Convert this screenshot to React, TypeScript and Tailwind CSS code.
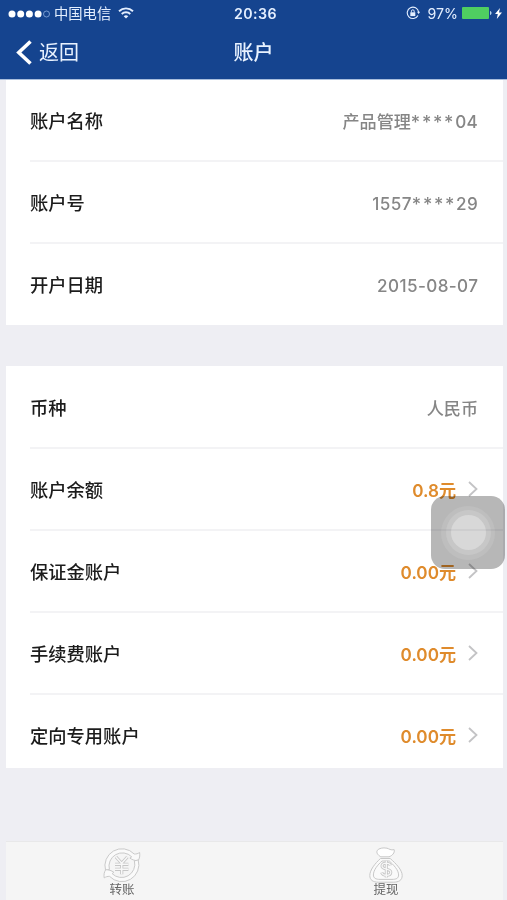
import type { ReactNode } from "react"

interface RowProps {
  label: string
  children: ReactNode
  amount?: boolean
  last?: boolean
}

function ChevronRight() {
  return (
    <svg className="-mt-[3px] ml-3 h-4 w-[10px] shrink-0" viewBox="0 0 10 16" fill="none" stroke="#c3c3c5" strokeWidth="1.8">
      <path d="M1 1l7.5 7L1 15" />
    </svg>
  )
}

function Stars() {
  return <span className="relative top-px text-[18px] tracking-[1.7px]">****</span>
}

function Row({ label, children, amount, last }: RowProps) {
  return (
    <div
      className={`ml-6 flex h-[82px] items-center justify-between pr-[25px] ${last ? "pt-px" : "border-b-2 border-[#f3f3f5] pt-[3px]"}`}
    >
      <span className="text-[18.3px] font-medium text-[#1c1c1c]">{label}</span>
      <div
        className={`flex items-center text-[17.1px] whitespace-nowrap ${amount ? "font-semibold text-[#df8b2c]" : "font-medium text-[#868686]"}`}
      >
        <span>{children}</span>
        {amount && <ChevronRight />}
      </div>
    </div>
  )
}

function StatusBar() {
  return (
    <div className="grid h-[27px] grid-cols-3 items-center text-[#e4efff]">
      <div className="flex items-center pl-2">
        <svg className="h-[10px] w-[43px]" viewBox="0 0 43 10" fill="#fff">
          <circle cx="4" cy="5" r="3.5" />
          <circle cx="12.7" cy="5" r="3.5" />
          <circle cx="21.4" cy="5" r="3.5" />
          <circle cx="30.1" cy="5" r="3.5" />
          <circle cx="38.5" cy="5" r="3" fill="none" stroke="#8fb0e0" strokeWidth="0.8" />
        </svg>
        <span className="ml-[3px] text-[14.3px] leading-5 whitespace-nowrap">中国电信</span>
        <svg className="-mt-[2px] ml-[7px] h-[12px] w-[16px]" viewBox="0 0 16 12" fill="none" stroke="currentColor" strokeWidth="1.9">
          <path d="M1 4.2a10.2 10.2 0 0 1 14 0" />
          <path d="M3.7 7a6.3 6.3 0 0 1 8.6 0" />
          <path d="M5.7 9.2a3.4 3.4 0 0 1 4.6 0L8 11.6z" fill="currentColor" stroke="none" />
        </svg>
      </div>
      <span className="pl-[4px] text-center text-[14.2px] font-semibold tracking-[0.4px]">20:36</span>
      <div className="flex items-center justify-end pr-[5px]">
        <svg className="h-[14px] w-[14px]" viewBox="0 0 14 14" fill="none" stroke="currentColor">
          <path d="M12 9.5A5.7 5.7 0 1 1 12.6 6" strokeWidth="1.1" />
          <path d="M11 5.7h3.2l-1.6 2.3z" fill="currentColor" stroke="none" />
          <path d="M4.3 6.3h5v3.8h-5z" fill="currentColor" stroke="none" />
          <path d="M5.4 6.5V5.2a1.4 1.4 0 0 1 2.8 0v1.3" strokeWidth="1" />
        </svg>
        <span className="ml-2 text-[14.2px]">97%</span>
        <svg className="ml-1 h-3 w-[30px]" viewBox="0 0 30 12">
          <rect x="0" y="0" width="27" height="12" rx="1" fill="#4fce61" />
          <path d="M28 4c2 .5 2 3.5 0 4z" fill="#b9d6ee" />
        </svg>
        <svg className="ml-[3px] h-[11px] w-[7px]" viewBox="0 0 7 11" fill="#fff">
          <path d="M5 0L0 6h2.8L1.8 11 7 4.6H4z" />
        </svg>
      </div>
    </div>
  )
}

function TransferIcon() {
  const yen = "M13 10l5.7 6.3 5.7-6.3M18.7 16.3v11M12 17.3h13.4M12 22.3h13.4"
  return (
    <svg className="h-9 w-[38px]" viewBox="0 0 38 36" fill="#fafafa" stroke="#cacaca" strokeWidth="1" strokeLinejoin="round">
      <path d="M2.6 23.5A17 17 0 0 1 31.2 7c2 .2 3.8-.4 5.4-1.5.5 3.2 0 5.9-1.5 8.2-3 0-5.8-.8-8.2-2.6l1.8-1.3A13.3 13.3 0 0 0 6.4 22.5z" />
      <path d="M35.2 12.9A17 17 0 0 1 6.6 29.4c-2-.2-3.8.4-5.4 1.5-.5-3.2 0-5.9 1.5-8.2 3 0 5.8.8 8.2 2.6l-1.8 1.3A13.3 13.3 0 0 0 31.4 13.9z" />
      <path d={yen} fill="none" stroke="#c6c6c6" strokeWidth="3.2" />
      <path d={yen} fill="none" stroke="#f8f8f8" strokeWidth="1.5" />
    </svg>
  )
}

function WithdrawIcon() {
  const dollar = "M21.5 18.5c-.6-1.7-2-2.3-4.3-2.3-2.5 0-4.2 1.1-4.2 2.9 0 4.2 8.8 2 8.8 6.2 0 1.9-1.9 3-4.4 3s-4.2-1-4.8-2.7M17.3 13.8v16.8"
  return (
    <svg className="h-9 w-[34px]" viewBox="0 0 34 36" fill="#fafafa" stroke="#c8c8c8" strokeWidth="1" strokeLinejoin="round">
      <path d="M11.8 9.8C8.7 8 7.2 5.7 8.2 3.5 9.8 1.2 14 .4 18 1.2c2 .5 3.7 2.3 7.2 1.5.8 3-2 6.1-5.2 7.1z" fill="#fff" />
      <path d="M11.5 11.5h9.7C27 16.5 33.2 23 33.2 28.5c0 4.8-3.4 6.7-9 6.7H9.5C4 35.2.8 33 .8 28.5c0-5.5 5.2-12 10.7-17z" />
      <path d="M13 14h7.3c4.2 3.8 9.3 9 9.3 14 0 3.3-2.4 4.4-6.6 4.4H11c-4.1 0-6.6-1.2-6.6-4.4 0-5 4.4-10.2 8.6-14z" />
      <path d={dollar} fill="none" stroke="#c6c6c6" strokeWidth="3" />
      <path d={dollar} fill="none" stroke="#f8f8f8" strokeWidth="1.3" />
    </svg>
  )
}

export default function App() {
  return (
    <div className="relative flex h-[900px] w-[507px] flex-col overflow-hidden bg-[#eeeef3] font-[Inter,'Noto_Sans_CJK_SC',sans-serif]">
      <header className="h-[79px] shrink-0 bg-[#15448f]">
        <StatusBar />
        <div className="grid h-[50px] grid-cols-3 items-center text-[#e8f2ff]">
          <div className="flex items-center pl-4">
            <svg className="h-[25px] w-[16px]" viewBox="0 0 16 25" fill="none" stroke="#fff" strokeWidth="3.6">
              <path d="M14.5 1.5L2.8 12.5l11.7 11" />
            </svg>
            <span className="ml-[7px] pt-[2px] text-[20px]">返回</span>
          </div>
          <h1 className="pt-[2px] text-center text-[20px] font-medium">账户</h1>
        </div>
      </header>

      <main className="flex flex-1 flex-col gap-[41px] border-t border-[#a9bedd] pr-1 pl-1.5">
        <section className="h-[245px] bg-white">
          <Row label="账户名称">
            产品管理<Stars /><span className="tracking-[0.3px]">04</span>
          </Row>
          <Row label="账户号">
            <span className="tracking-[0.4px]">1557</span><Stars /><span className="tracking-[0.3px]">29</span>
          </Row>
          <Row label="开户日期" last>
            <span className="-mr-[0.4px] tracking-[0.4px]">2015-08-07</span>
          </Row>
        </section>

        <section className="h-[402px] bg-white pt-px">
          <Row label="币种">人民币</Row>
          <Row label="账户余额" amount>0.8元</Row>
          <Row label="保证金账户" amount>0.00元</Row>
          <Row label="手续费账户" amount>0.00元</Row>
          <Row label="定向专用账户" amount last>0.00元</Row>
        </section>
      </main>

      <nav className="mr-1 ml-1.5 flex h-[59px] shrink-0 border-t border-[#e8e8e9] bg-[#f5f5f5] pt-[5px] text-[12.5px] leading-[14px] text-[#666]">
        <div className="flex w-[232px] flex-col items-center">
          <TransferIcon />
          <span>转账</span>
        </div>
        <div className="ml-8 flex w-[232px] flex-col items-center">
          <WithdrawIcon />
          <span>提现</span>
        </div>
      </nav>

      {/* AssistiveTouch button floating over the rows */}
      <div className="absolute top-[496px] left-[431px] flex h-[73px] w-[74px] items-center justify-center rounded-[14px] bg-[#b7b7b7] mix-blend-multiply">
        <div className="flex size-[54px] items-center justify-center rounded-full bg-[#bebebe]">
          <div className="flex size-[45px] items-center justify-center rounded-full bg-[#c7c7c7]">
            <div className="size-[35px] rounded-full bg-[#d8d8d8]" />
          </div>
        </div>
      </div>
    </div>
  )
}
